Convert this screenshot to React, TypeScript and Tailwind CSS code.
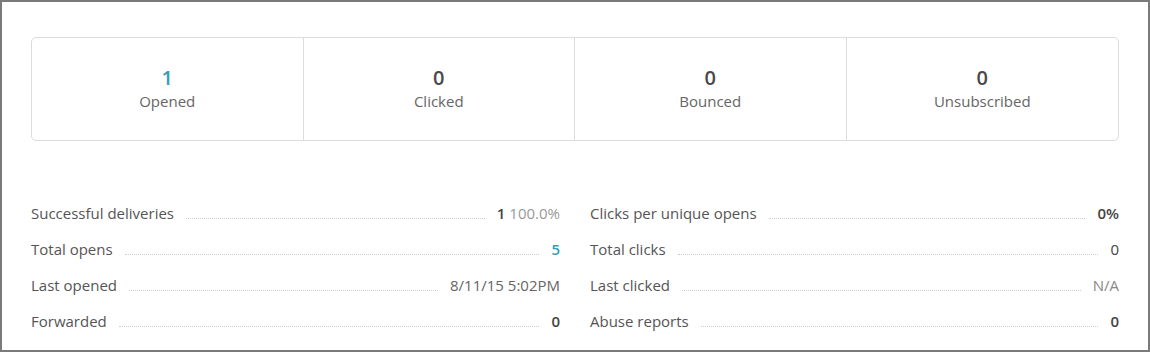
import React from "react";

const cards = [
  { n: "1", label: "Opened", teal: true },
  { n: "0", label: "Clicked" },
  { n: "0", label: "Bounced" },
  { n: "0", label: "Unsubscribed" },
];

type Row = { label: string; value: React.ReactNode };

const left: Row[] = [
  {
    label: "Successful deliveries",
    value: (
      <span>
        <span className="font-semibold text-[#444]">1</span>{" "}
        <span className="text-[#999]">100.0%</span>
      </span>
    ),
  },
  { label: "Total opens", value: <span className="font-semibold text-[#3a9cb3]">5</span> },
  { label: "Last opened", value: <span className="text-[#666]">8/11/15 5:02PM</span> },
  { label: "Forwarded", value: <span className="font-semibold text-[#444]">0</span> },
];

const right: Row[] = [
  { label: "Clicks per unique opens", value: <span className="font-semibold text-[#444]">0%</span> },
  { label: "Total clicks", value: <span className="text-[#444]">0</span> },
  { label: "Last clicked", value: <span className="text-[#888]">N/A</span> },
  { label: "Abuse reports", value: <span className="font-semibold text-[#444]">0</span> },
];

function Column({ rows }: { rows: Row[] }) {
  return (
    <div className="flex flex-col">
      {rows.map((r) => (
        <div key={r.label} className="flex h-[36px] items-center text-[15px]">
          <span className="text-[#555]">{r.label}</span>
          <span className="mx-[12px] mt-[10px] flex-1 border-b border-dotted border-[#cfcfcf]" />
          {r.value}
        </div>
      ))}
    </div>
  );
}

export default function App() {
  return (
    <div
      className="box-border h-[352px] w-[1150px] border-2 border-[#7b7b7b] bg-white px-[29px] pt-[35px]"
      style={{ fontFamily: '"Open Sans", sans-serif' }}
    >
      <div className="grid h-[104px] grid-cols-4 rounded-[5px] border border-[#dcdcdc]">
        {cards.map((c, i) => (
          <div
            key={c.label}
            className={`flex flex-col items-center justify-center ${i < 3 ? "border-r border-[#dcdcdc]" : ""}`}
          >
            <div
              className={`text-[20px] font-semibold leading-[24px] ${c.teal ? "text-[#3a9cb3]" : "text-[#4a4a4a]"}`}
            >
              {c.n}
            </div>
            <div className="text-[15px] leading-[22px] text-[#666]">{c.label}</div>
          </div>
        ))}
      </div>
      <div className="mt-[54px] grid grid-cols-2 gap-x-[30px]">
        <Column rows={left} />
        <Column rows={right} />
      </div>
    </div>
  );
}
